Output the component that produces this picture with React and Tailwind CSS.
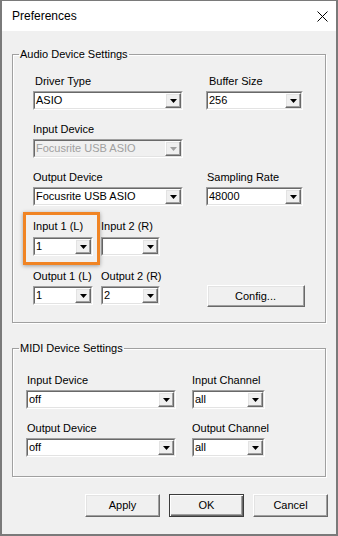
import React from 'react';

const FONT = { fontFamily: '"Liberation Sans", Arial, sans-serif' };

function Arrow({ disabled }) {
  return (
    <svg width="7" height="4" viewBox="0 0 7 4">
      <polygon points="0,0 7,0 3.5,4" fill={disabled ? '#a0a0a0' : '#000'} />
    </svg>
  );
}

function Combo({ value, w, disabled }) {
  return (
    <div className={`${w} flex h-[19px] shrink-0 border border-t-[#a0a0a0] border-l-[#a0a0a0] border-r-white border-b-white`}>
      <div className={`flex flex-1 items-center border border-t-[#696969] border-l-[#696969] border-r-[#e3e3e3] border-b-[#e3e3e3] ${disabled ? 'bg-[#f0f0f0]' : 'bg-white'}`}>
        <span className={`flex-1 truncate pl-[1px] text-[11px] leading-[13px] ${disabled ? 'text-[#a0a0a0]' : 'text-black'}`}>{value}</span>
        <div className="flex h-[15px] w-[16px] items-center justify-center border border-t-white border-l-white border-r-[#696969] border-b-[#696969] bg-[#f0f0f0] shadow-[inset_-1px_-1px_0_#a0a0a0,inset_1px_1px_0_#e3e3e3]">
          <Arrow disabled={disabled} />
        </div>
      </div>
    </div>
  );
}

function Field({ label, children, className = '' }) {
  return (
    <div className={`flex flex-col ${className}`}>
      <span className="mb-[3px] whitespace-nowrap text-[11px] leading-[13px] text-black">{label}</span>
      {children}
    </div>
  );
}

function Button({ children, w = 'w-[75px]', h = 'h-[23px]', primary }) {
  const cls = primary
    ? 'border-[#3c3c3c] shadow-[inset_1px_1px_0_#fff,inset_-1px_-1px_0_#696969,inset_-2px_-2px_0_#a0a0a0]'
    : 'border-t-white border-l-white border-r-[#696969] border-b-[#696969] shadow-[inset_-1px_-1px_0_#a0a0a0,inset_1px_1px_0_#e3e3e3]';
  return (
    <div className={`${w} ${h} flex items-center justify-center border bg-[#f0f0f0] text-[11px] text-black ${cls}`}>
      {children}
    </div>
  );
}

function Group({ title, children, className = '', inner = '' }) {
  return (
    <fieldset className={`border border-[#a0a0a0] shadow-[inset_1px_1px_0_#fff,1px_1px_0_#fff] ${className}`}>
      <legend className="ml-[6px] px-[1px] text-[11px] leading-[13px] text-black">{title}</legend>
      <div className={inner}>{children}</div>
    </fieldset>
  );
}

export default function App() {
  return (
    <div style={FONT} className="flex h-[536px] w-[338px] flex-col border-2 border-t border-[#7a7a7a] bg-[#f0f0f0]">
      <div className="flex h-[30px] shrink-0 items-center justify-between bg-white pl-[10px] pr-[7px]">
        <span className="text-[12px] text-black">Preferences</span>
        <svg width="11" height="11" viewBox="0 0 11 11" className="mr-[1px]">
          <path d="M0.5 0.5 L10.5 10.5 M10.5 0.5 L0.5 10.5" stroke="#000" strokeWidth="1" />
        </svg>
      </div>

      <div className="flex flex-col px-[10px]">
        <Group title="Audio Device Settings" className="mt-[17px]" inner="pb-[15px] pl-[20px] pt-[14px]">
          <div className="flex gap-[23px]">
            <Field label="Driver Type" className="pl-[2px]"><div className="-ml-[2px]"><Combo value="ASIO" w="w-[150px]" /></div></Field>
            <Field label="Buffer Size" className="pl-[3px]"><div className="-ml-[3px]"><Combo value="256" w="w-[97px]" /></div></Field>
          </div>
          <div className="mt-[13px] flex">
            <Field label="Input Device"><Combo value="Focusrite USB ASIO" w="w-[150px]" disabled /></Field>
          </div>
          <div className="mt-[13px] flex gap-[23px]">
            <Field label="Output Device"><Combo value="Focusrite USB ASIO" w="w-[150px]" /></Field>
            <Field label="Sampling Rate" className="pl-[1px]"><div className="-ml-[1px]"><Combo value="48000" w="w-[97px]" /></div></Field>
          </div>
          <div className="mt-[14px] flex gap-[8px]">
            <div className="relative">
              <Field label="Input 1 (L)"><div className="mt-[1px]"><Combo value="1" w="w-[60px]" /></div></Field>
              <div className="pointer-events-none absolute left-[-10px] top-[-8px] h-[53px] w-[77px] border-[3px] border-[#f08424] shadow-[0_1px_4px_rgba(0,0,0,0.35)]" />
            </div>
            <Field label="Input 2 (R)"><div className="mt-[1px]"><Combo value="" w="w-[59px]" /></div></Field>
          </div>
          <div className="mt-[14px] flex items-start">
            <Field label="Output 1 (L)"><Combo value="1" w="w-[60px]" /></Field>
            <Field label="Output 2 (R)" className="ml-[8px]"><Combo value="2" w="w-[59px]" /></Field>
            <div className="ml-[45px] mt-[15px]">
              <Button w="w-[98px]" h="h-[22px]">Config...</Button>
            </div>
          </div>
        </Group>

        <Group title="MIDI Device Settings" className="mt-[19px]" inner="pb-[19px] pl-[13px] pt-[19px]">
          <div className="flex gap-[16px]">
            <Field label="Input Device" className="pl-[1px]"><div className="-ml-[1px]"><Combo value="off" w="w-[150px]" /></div></Field>
            <Field label="Input Channel"><Combo value="all" w="w-[73px]" /></Field>
          </div>
          <div className="mt-[13px] flex gap-[16px]">
            <Field label="Output Device" className="pl-[1px]"><div className="-ml-[1px]"><Combo value="off" w="w-[150px]" /></div></Field>
            <Field label="Output Channel"><Combo value="all" w="w-[73px]" /></Field>
          </div>
        </Group>

        <div className="-mr-[2px] mt-[17px] flex justify-end gap-[9px]">
          <Button>Apply</Button>
          <Button primary>OK</Button>
          <Button>Cancel</Button>
        </div>
      </div>
    </div>
  );
}
